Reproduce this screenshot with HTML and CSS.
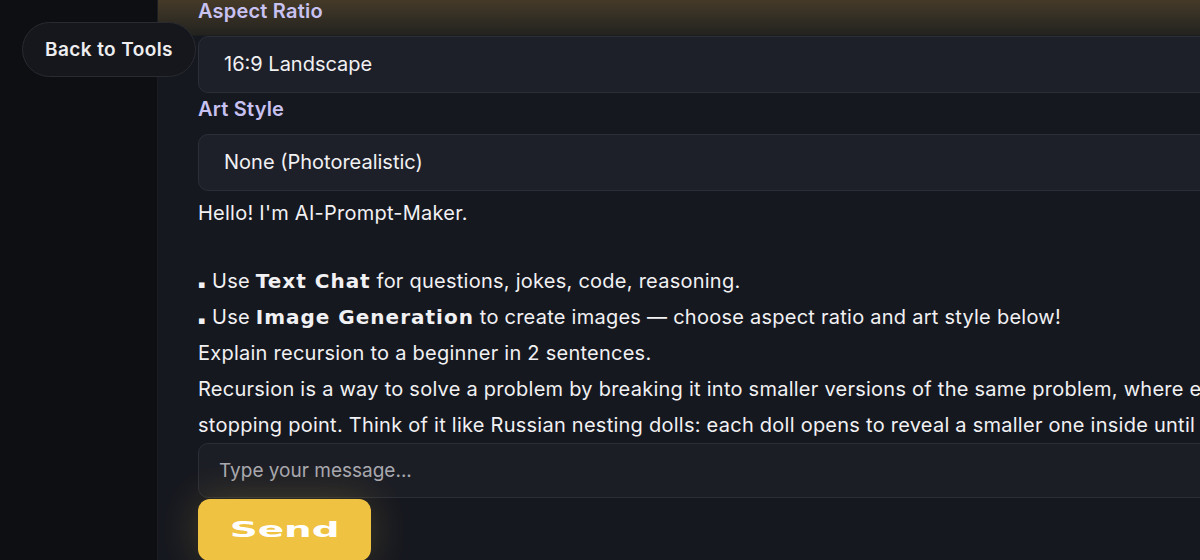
FILE: index.html
```html
<!DOCTYPE html>
<html lang="en">
<head>
    <meta charset="UTF-8">
    <meta name="viewport" content="width=device-width, initial-scale=1.0">
    <title>AI-Prompt-Maker</title>
    <link rel="stylesheet" href="styles.css">
</head>
<body>
    <div class="app">
        <!-- sidebar -->
        <aside class="sidebar"></aside>

        <!-- main panel -->
        <main class="main">
            <div class="panel">
                <label class="field-label">Aspect Ratio</label>
                <div class="select">16:9 Landscape</div>

                <label class="field-label">Art Style</label>
                <div class="select">None (Photorealistic)</div>

                <div class="chat">
                    <div class="msg bot">
                        <p>Hello! I'm AI-Prompt-Maker.</p>
                        <ul class="intro-list">
                            <li>Use <b>Text Chat</b> for questions, jokes, code, reasoning.</li>
                            <li>Use <b>Image Generation</b> to create images — choose aspect ratio and art style below!</li>
                        </ul>
                    </div>
                    <div class="msg user">Explain recursion to a beginner in 2 sentences.</div>
                    <div class="msg bot">Recursion is a way to solve a problem by breaking it into smaller versions of the same problem, where each step gets closer to a simple<br>stopping point. Think of it like Russian nesting dolls: each doll opens to reveal a smaller one inside until you reach the smallest one.</div>
                </div>

                <div class="composer">
                    <input class="chat-input" type="text" placeholder="Type your message...">
                    <button class="send-btn"><span>Send</span></button>
                </div>
            </div>
        </main>
    </div>

    <a href="#" class="back-btn">Back to Tools</a>
</body>
</html>
```

FILE: styles.css
```css
/* base */
:root {
    --bg: #161820;
    --sidebar: #0e0f12;
    --field: #1e2029;
    --border: #2b2e37;
    --text: #f1f1f3;
    --label: #c8c2f2;
    --yellow: #f0c242;
}

* {
    margin: 0;
    padding: 0;
    box-sizing: border-box;
}

body {
    background: var(--bg);
    color: var(--text);
    font-family: 'Inter', 'Noto Sans', sans-serif;
    height: 560px;
    overflow: hidden;
}

.app {
    display: flex;
    height: 560px;
}

/* sidebar */
.sidebar {
    width: 158px;
    flex-shrink: 0;
    background: var(--sidebar);
    border-right: 1px solid #1c1d23;
}

/* main */
.main {
    flex: 1;
    padding-left: 40px;
    overflow: hidden;
    background: linear-gradient(to bottom, #453a28 0, #2c2922 26px, #23221f 35px, var(--bg) 36px);
}

.panel {
    width: 1300px;
    margin-top: -5px;
}

.field-label {
    display: block;
    color: var(--label);
    font-size: 20px;
    font-weight: 600;
    letter-spacing: 0.2px;
    line-height: 24px;
    margin: 4px 0 13px;
}

.select {
    background: var(--field);
    border: 1px solid var(--border);
    border-radius: 10px;
    padding: 0 25px;
    line-height: 55px;
    font-size: 20px;
}

/* chat */
.chat {
    margin-top: 4px;
    font-size: 20px;
    letter-spacing: 0.25px;
    line-height: 36px;
    white-space: nowrap;
}

.msg b {
    font-family: 'DejaVu Sans', sans-serif;
    font-weight: 700;
    font-size: 20px;
    letter-spacing: 1px;
    line-height: 1;
}

.intro-list {
    list-style: none;
    margin-top: 32px;
}

.intro-list li::before {
    content: "▪";
    display: inline-block;
    width: 14px;
    font-family: 'DejaVu Sans', sans-serif;
    font-size: 11px;
    line-height: 1;
}

/* composer */
.chat-input {
    display: block;
    width: 100%;
    height: 55px;
    background: #1c1e26;
    border: 1px solid var(--border);
    border-radius: 10px;
    padding: 0 20px;
    color: var(--text);
    font-family: inherit;
    font-size: 19px;
    outline: none;
}

.chat-input::placeholder {
    color: #a8a8b0;
}

.send-btn {
    margin-top: 1px;
    width: 173px;
    height: 62px;
    background: var(--yellow);
    border: none;
    border-radius: 12px;
    box-shadow: 0 0 40px rgba(240, 194, 66, 0.22);
    cursor: pointer;
}

.send-btn span {
    display: inline-block;
    color: #fff;
    font-family: 'DejaVu Sans', sans-serif;
    font-weight: 700;
    font-size: 21px;
    transform: scaleX(1.85);
}

/* floating button */
.back-btn {
    position: fixed;
    top: 22px;
    left: 22px;
    width: 174px;
    height: 55px;
    display: flex;
    align-items: center;
    justify-content: center;
    background: #16171d;
    border: 1px solid #2a2b31;
    border-radius: 28px;
    color: #eeeef0;
    font-size: 19px;
    font-weight: 600;
    letter-spacing: 0.4px;
    text-decoration: none;
}
```
